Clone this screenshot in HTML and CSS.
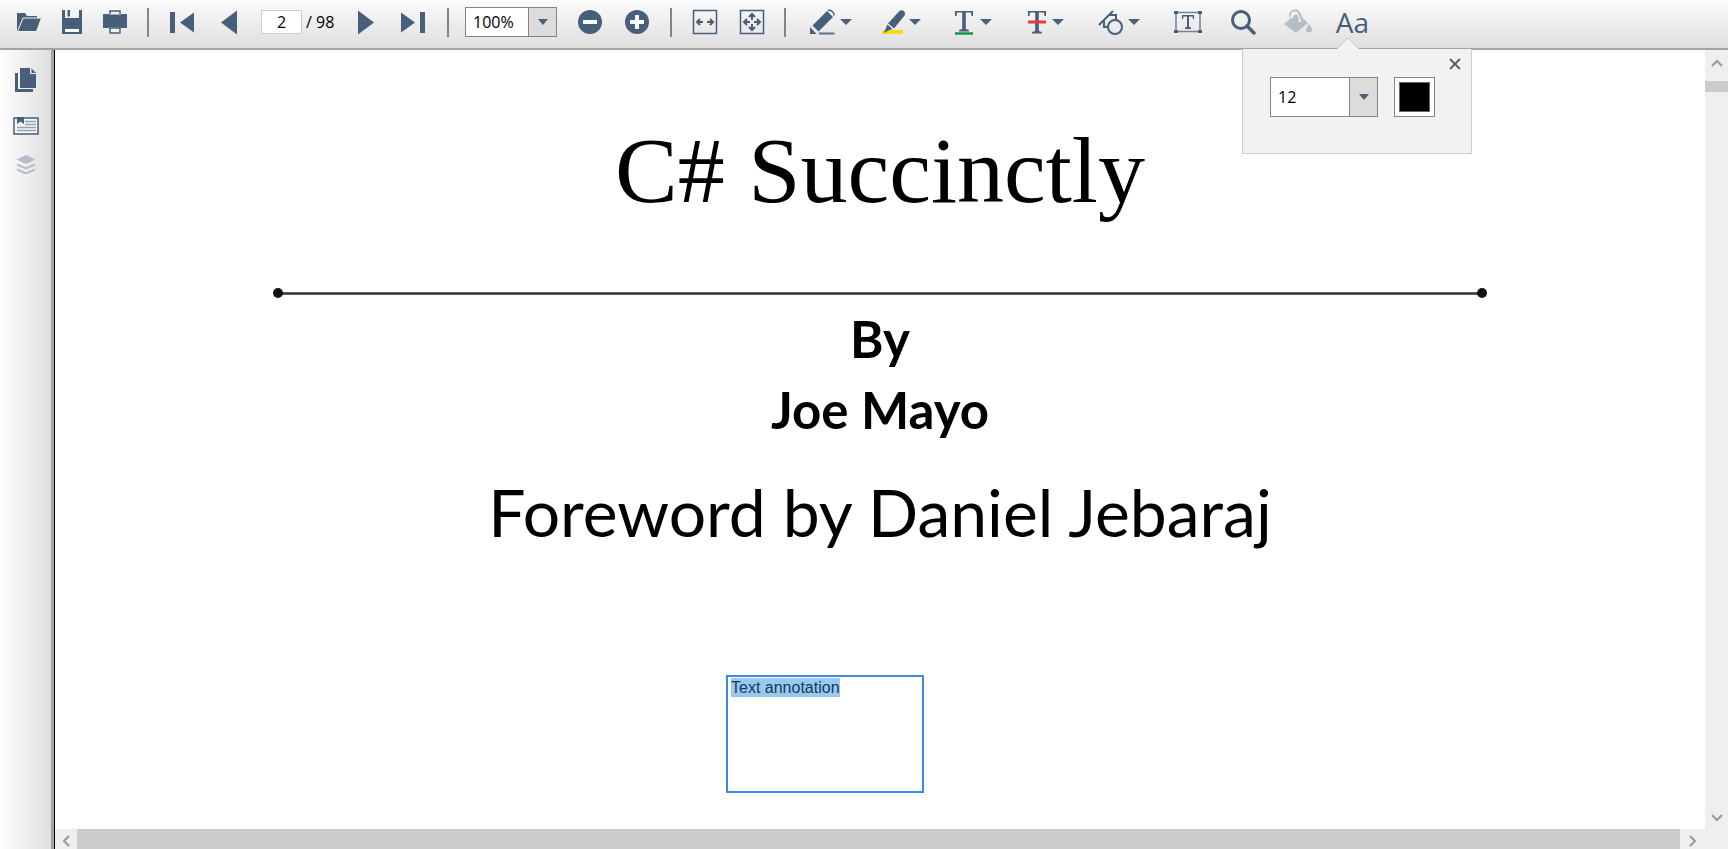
FILE: index.html
```html
<!DOCTYPE html>
<html lang="en">
<head>
<meta charset="utf-8">
<title>PDF Viewer</title>
<link rel="stylesheet" href="styles.css">
</head>
<body>
<header class="toolbar" role="toolbar" aria-label="Document tools">
  <div class="group files">
    <button class="tool" aria-label="Open"><svg width="26" height="26" viewBox="0 0 26 26"><path d="M1 22V4h8l2 3h10v3H7L2 22z" fill="currentColor"/><path d="M7 9h18.500l-5 13.500H1.500z" fill="currentColor" stroke="#f4f4f4"/></svg></button>
    <button class="tool" aria-label="Save"><svg width="22" height="26" viewBox="0 0 22 26"><path d="M1 1h3v8h14V1h3v24H1z" fill="currentColor"/><path d="M6.500 1H9v6.500H6.500z" fill="currentColor"/><path d="M4 20h14v3H4z" fill="#fff"/></svg></button>
    <button class="tool" aria-label="Print"><svg width="26" height="26" viewBox="0 0 26 26"><path d="M1 5h24v14H1z" fill="currentColor"/><path d="M7 1.500h12v4H7zM7 18.500h12v6H7z" fill="#f2f2f2"/><path d="M8 5V2h10v3M8 19v5h10v-5z" fill="none" stroke="currentColor" stroke-width="1.500"/></svg></button>
  </div>
  <span class="sep"></span>
  <div class="group pager">
    <button class="tool" aria-label="First page"><svg width="26" height="26" viewBox="0 0 26 26"><path d="M1 3h5v21H1zM25 3.500v20L11 13.500z" fill="currentColor"/></svg></button>
    <button class="tool" aria-label="Previous page"><svg width="18" height="26" viewBox="0 0 18 26"><path d="M17 1.500v24L1 13.500z" fill="currentColor"/></svg></button>
    <input class="page-number" type="text" value="2" aria-label="Page number">
    <span class="page-total">/ 98</span>
    <button class="tool" aria-label="Next page"><svg width="18" height="26" viewBox="0 0 18 26"><path d="M1 1.500v24l16-12z" fill="currentColor"/></svg></button>
    <button class="tool" aria-label="Last page"><svg width="26" height="26" viewBox="0 0 26 26"><path d="M20 3h5v21h-5zM1 3.500v20l14-10z" fill="currentColor"/></svg></button>
  </div>
  <span class="sep"></span>
  <div class="combo zoom-level">
    <select aria-label="Zoom level"><option>100%</option></select>
    <span class="combo-arrow"><svg width="10" height="6" viewBox="0 0 10 6"><path d="M0 0h10L5 6z" fill="currentColor"/></svg></span>
  </div>
  <div class="group zooming">
    <button class="tool" aria-label="Zoom out"><svg width="26" height="26" viewBox="0 0 26 26"><circle cx="13" cy="13" r="12" fill="currentColor"/><path d="M6 13h14" stroke="#fff" stroke-width="4"/></svg></button>
    <button class="tool" aria-label="Zoom in"><svg width="26" height="26" viewBox="0 0 26 26"><circle cx="13" cy="13" r="12" fill="currentColor"/><path d="M6 13h14M13 6v14" stroke="#fff" stroke-width="4"/></svg></button>
  </div>
  <span class="sep"></span>
  <div class="group fitting">
    <button class="tool" aria-label="Fit to width"><svg width="26" height="26" viewBox="0 0 26 26" fill="none" stroke="currentColor"><path d="M1.500 1.500h23v23h-23z" stroke-width="1.500"/><path d="M11 13H5M8 10l-3 3 3 3M15 13h6M18 10l3 3-3 3" stroke-width="2"/></svg></button>
    <button class="tool" aria-label="Fit to page"><svg width="26" height="26" viewBox="0 0 26 26" fill="none" stroke="currentColor"><path d="M1.500 1.500h23v23h-23z" stroke-width="1.500"/><path d="M11 13H5M8 10l-3 3 3 3M15 13h6M18 10l3 3-3 3M13 11V5M10 8l3-3 3 3M13 15v6M10 18l3 3 3-3" stroke-width="2"/></svg></button>
  </div>
  <span class="sep"></span>
  <div class="group markup">
    <button class="tool menu" aria-label="Ink"><svg width="26" height="26" viewBox="0 0 26 26"><path d="M2.500 16.500L17 2l6 6L8.500 22.500z" fill="currentColor"/><path d="M0 18v7h6.500z" fill="currentColor"/><path d="M18 1.500c3-1 6.500 2 5.800 5" fill="none" stroke="currentColor" stroke-width="1.500"/><path d="M9 24.500h15.500" stroke="currentColor" stroke-width="2" opacity=".85"/></svg><svg width="12" height="7" viewBox="0 0 12 7"><path d="M0 0h12L6 6z" fill="currentColor"/></svg></button>
    <button class="tool menu narrow" aria-label="Highlight"><svg width="23" height="26" viewBox="0 0 23 26"><path d="M1 21h20v4H0z" fill="#fbd914"/><path d="M6 14.500L17 2.500c3-3 7.500.5 5.500 4L12 19.500z" fill="currentColor"/><path d="M5.500 15.500l5 4.500-4 1.500L2 24l1.500-4z" fill="currentColor"/><path d="M5.500 14.500l6.500 6" stroke="#f4f4f4"/></svg><svg width="12" height="7" viewBox="0 0 12 7"><path d="M0 0h12L6 6z" fill="currentColor"/></svg></button>
    <button class="tool menu narrow" aria-label="Underline"><svg width="22" height="26" viewBox="0 0 22 26"><path d="M1 2h18v5h-1.500L17 3.500h-5.200V20l3.200 1v1.500H5V21l3.200-1V3.500H3L2.500 7H1z" fill="currentColor"/><path d="M1 24.500h18" stroke="#159447" stroke-width="2.500"/></svg><svg width="12" height="7" viewBox="0 0 12 7"><path d="M0 0h12L6 6z" fill="currentColor"/></svg></button>
    <button class="tool menu narrow" aria-label="Strikethrough"><svg width="22" height="26" viewBox="0 0 22 26"><path d="M2 2h18v5h-1.500L18 3.500h-5.200V22l3 1v1.500H6V23l3.200-1V3.500H4L3.500 7H2z" fill="currentColor"/><path d="M2 13h18" stroke="#f0363b" stroke-width="3"/></svg><svg width="12" height="7" viewBox="0 0 12 7"><path d="M0 0h12L6 6z" fill="currentColor"/></svg></button>
    <button class="tool menu" aria-label="Shapes"><svg width="26" height="26" viewBox="0 0 26 26" fill="none" stroke="currentColor" stroke-width="2"><circle cx="17" cy="18" r="7"/><path d="M1 16L15 2M10 6h8v5M6 12v6h4"/></svg><svg width="12" height="7" viewBox="0 0 12 7"><path d="M0 0h12L6 6z" fill="currentColor"/></svg></button>
  </div>
  <div class="group editing">
    <button class="tool" aria-label="Text box"><svg width="28" height="26" viewBox="0 0 28 26"><path d="M2 3.500h24v19H2z" fill="none" stroke="currentColor" stroke-width="1.500" opacity=".75"/><path d="M0 2h4v3H0zM24 2h4v3h-4zM0 21h4v3H0zM24 21h4v3h-4z" fill="currentColor"/><path d="M8 6h12v4h-1l-.5-2.500H15V18l2 .5V20h-6v-1.500l2-.5V7.500H9.500L9 10H8z" fill="currentColor"/></svg></button>
    <button class="tool" aria-label="Search"><svg width="26" height="26" viewBox="0 0 26 26" fill="none" stroke="currentColor"><circle cx="11" cy="11" r="8.500" stroke-width="3"/><path d="M17 17l7 7" stroke-width="3.500" stroke-linecap="round"/></svg></button>
    <button class="tool" aria-label="Fill color" disabled><svg width="30" height="26" viewBox="0 0 30 26"><path d="M1 15L14 4l11 10-12 10z" fill="currentColor"/><path d="M7 8c-1-4 2-6.500 5-6.500s4.500 2 5.500 5l1 4" fill="none" stroke="currentColor" stroke-width="1.800"/><path d="M9.500 9c-.5-3 1-4.500 3-4.500s3 1.500 4 6" fill="none" stroke="#f0f0f0" stroke-width="1.500"/><circle cx="17" cy="11.500" r="1.500" fill="#eee"/><path d="M26 15c2 3 3 4 3 5.500a3 3 0 0 1-6 0c0-1.500 1-2.500 3-5.500z" fill="currentColor"/></svg></button>
    <div class="font-tool">
      <button class="tool letters" aria-expanded="true">Aa</button>
      <section class="popup" aria-label="Text format">
        <svg class="popup-tip" width="22" height="12" viewBox="0 0 22 12"><path d="M0 12L11 1l11 11z" fill="#f2f2f2"/><path d="M0 12L11 1l11 11" fill="none" stroke="#ccc"/></svg>
        <button class="close" aria-label="Close"><svg width="12" height="12" viewBox="0 0 12 12"><path d="M1 1l10 10M11 1L1 11" stroke="currentColor" stroke-width="1.800"/></svg></button>
        <div class="combo font-size">
          <select aria-label="Font size"><option>12</option></select>
          <span class="combo-arrow"><svg width="10" height="6" viewBox="0 0 10 6"><path d="M0 0h10L5 6z" fill="currentColor"/></svg></span>
        </div>
        <button class="swatch" aria-label="Font color"></button>
      </section>
    </div>
  </div>
</header>
<div class="workspace">
  <nav class="sidebar" aria-label="Panels">
    <button class="thumbnails" aria-label="Page thumbnails"><svg width="22" height="26" viewBox="0 0 22 26"><path d="M0 6h3v16h15v3H0z" fill="currentColor"/><path d="M5 1h10v6h6v14H5z" fill="currentColor"/><path d="M16.500 1.500L21 6h-4.500z" fill="currentColor"/></svg></button>
    <button aria-label="Bookmarks"><svg width="26" height="20" viewBox="0 0 26 20"><path d="M1 2h24v16H1z" fill="#f6f6f6" stroke="currentColor" stroke-width="1.500"/><path d="M12 5.500h11M12 8.500h11M4 11.500h19M4 14.500h19" stroke="currentColor" stroke-width="1.500" opacity=".55"/><path d="M4 1h7v7L7.500 5.500 4 8z" fill="currentColor"/></svg></button>
    <button aria-label="Layers" disabled><svg width="20" height="20" viewBox="0 0 20 20"><path d="M10 0l9.500 4.500L10 9 .5 4.500z" fill="currentColor"/><path d="M1 9.500l9 4 9-4M1 14.500l9 4 9-4" fill="none" stroke="currentColor" stroke-width="2"/></svg></button>
  </nav>
  <main class="viewer">
    <article class="page">
      <h1>C# Succinctly</h1>
      <div class="rule"></div>
      <p class="author">By</p>
      <p class="author">Joe Mayo</p>
      <p class="foreword">Foreword by Daniel Jebaraj</p>
      <textarea class="annotation" aria-label="Text annotation" spellcheck="false">Text annotation</textarea>
    </article>
    <div class="scroll vertical">
      <button aria-label="Scroll up"><svg width="12" height="8" viewBox="0 0 12 8"><path d="M1 7l5-5 5 5"/></svg></button>
      <span class="thumb"></span>
      <button class="end" aria-label="Scroll down"><svg width="12" height="8" viewBox="0 0 12 8"><path d="M1 1l5 5 5-5"/></svg></button>
    </div>
    <div class="scroll horizontal">
      <button aria-label="Scroll left"><svg width="8" height="12" viewBox="0 0 8 12"><path d="M7 1L2 6l5 5"/></svg></button>
      <span class="thumb"></span>
      <button class="end" aria-label="Scroll right"><svg width="8" height="12" viewBox="0 0 8 12"><path d="M1 1l5 5-5 5"/></svg></button>
    </div>
  </main>
</div>
<script src="viewer.js"></script>
</body>
</html>
```
FILE: viewer.js
```js
const annotation = document.querySelector('.annotation');
annotation.focus();
annotation.select();
```
FILE: styles.css
```css
* { box-sizing: border-box; }
body {
  margin: 0;
  height: 100vh;
  display: flex;
  flex-direction: column;
  overflow: hidden;
  background: #fff;
  color: #000;
  font: 16px/20px "Open Sans", "Noto Sans", sans-serif;
}
button {
  display: flex;
  align-items: center;
  justify-content: center;
  padding: 0;
  border: 0;
  background: none;
  color: #475f78;
}
button:disabled { color: #b5bec8; }
svg { display: block; flex: none; }

.toolbar {
  flex: none;
  display: flex;
  align-items: center;
  height: 50px;
  padding: 0 0 4px 7px;
  background: linear-gradient(#fbfbfb, #dfdfdf);
  border-bottom: 2px solid #a3a3a3;
}
.group { display: flex; align-items: center; }
.tool { height: 36px; width: 47px; }
.files .tool { width: 43px; }
.sep { flex: none; width: 2px; height: 29px; margin: 0 9px 0 11px; background: #858585; }
.page-number {
  width: 41px;
  height: 24px;
  margin: 0 4px 0 9px;
  padding: 0;
  border: 1px solid #ccc;
  background: #fff;
  font: inherit;
  text-align: center;
}
.page-total { width: 36px; }
.combo { display: flex; position: relative; }
.combo select {
  appearance: none;
  width: 100%;
  height: 100%;
  margin: 0;
  padding: 0 0 0 7px;
  border: 1px solid #858585;
  border-radius: 0;
  background: #fff;
  color: #000;
  font: inherit;
}
.combo-arrow {
  position: absolute;
  top: 1px;
  right: 1px;
  bottom: 1px;
  width: 28px;
  display: flex;
  align-items: center;
  justify-content: center;
  border-left: 1px solid #858585;
  background: #dcdcdc;
  color: #475f78;
  pointer-events: none;
}
.zoom-level { width: 92px; height: 30px; margin: 0 9px 0 7px; }
.zooming { margin-right: -1px; }
.fitting { margin-right: -2px; }
.menu { width: 72px; gap: 4px; }
.narrow { padding-right: 4px; }
.editing { margin-left: 5px; }
.editing .tool { width: 55px; }
.font-tool { position: relative; }
.letters { font: 28px/36px "Open Sans", "Noto Sans", sans-serif; }

.popup {
  position: absolute;
  z-index: 2;
  top: 45px;
  right: -92px;
  display: flex;
  align-items: flex-start;
  gap: 16px;
  width: 230px;
  height: 105px;
  padding: 28px 27px 0;
  border: 1px solid #ccc;
  border-top: 0;
  background: #f2f2f2;
}
.popup-tip { position: absolute; top: -12px; left: 94px; }
.close { position: absolute; top: 7px; right: 8px; width: 16px; height: 16px; }
.font-size { width: 108px; height: 40px; }
.swatch {
  width: 41px;
  height: 40px;
  border: 1px solid #858585;
  background: #000;
  box-shadow: inset 0 0 0 4px #fff, inset 0 0 0 5px #666;
}

.workspace { flex: 1; min-height: 0; display: flex; }
.sidebar {
  flex: none;
  width: 55px;
  padding: 17px 3px 0 0;
  display: flex;
  flex-direction: column;
  align-items: center;
  gap: 19px;
  background: linear-gradient(90deg, #fff, #dcdcdc);
  border-right: 1px solid #000;
  box-shadow: inset -3px 0 #a3a3a3;
}
.thumbnails { margin-bottom: 4px; }
.viewer {
  flex: 1;
  min-width: 0;
  display: grid;
  grid-template-columns: 1fr 23px;
  grid-template-rows: 1fr 20px;
  background: #efefef;
}
.page {
  position: relative;
  display: flex;
  flex-direction: column;
  align-items: center;
  min-width: 0;
  background: #fff;
}
h1, p { margin: 0; white-space: nowrap; }
h1 { margin-top: 60px; font: 94px/120px "Liberation Serif", serif; }
.rule {
  width: 73%;
  height: 3px;
  margin: 62px 0 8px;
  background: linear-gradient(#777, #333 50%, #777);
  position: relative;
}
.rule::before, .rule::after {
  content: "";
  position: absolute;
  top: -4px;
  width: 10px;
  height: 10px;
  border-radius: 50%;
  background: #111;
}
.rule::before { left: -5px; }
.rule::after { right: -5px; }
.author { font: 700 51px/71px Lato, "Open Sans", sans-serif; }
.foreword { margin-top: 22px; font: 66px/90px Lato, "Open Sans", sans-serif; }
.annotation {
  position: absolute;
  top: 625px;
  left: calc(50% - 154px);
  width: 198px;
  height: 118px;
  padding: 1px 3px;
  border: 2px solid #3f8ae0;
  outline: 0;
  background: #fff;
  color: #123a5e;
  font: 16px/19px "Liberation Sans", Arial, sans-serif;
  resize: none;
}
.annotation::selection { background: #99c9ef; color: #123a5e; }

.scroll { display: flex; background: #efefef; }
.scroll path { fill: none; stroke: #999; stroke-width: 2; }
.scroll .thumb { background: #cbcbcb; }
.vertical { flex-direction: column; }
.vertical button { height: 25px; margin-bottom: 6px; }
.vertical .thumb { height: 11px; }
.vertical .end { height: 22px; margin: auto 0 0; }
.horizontal .thumb { flex: 1; }
.horizontal button { width: 22px; padding-top: 4px; }
.horizontal .end { width: 25px; }
```
